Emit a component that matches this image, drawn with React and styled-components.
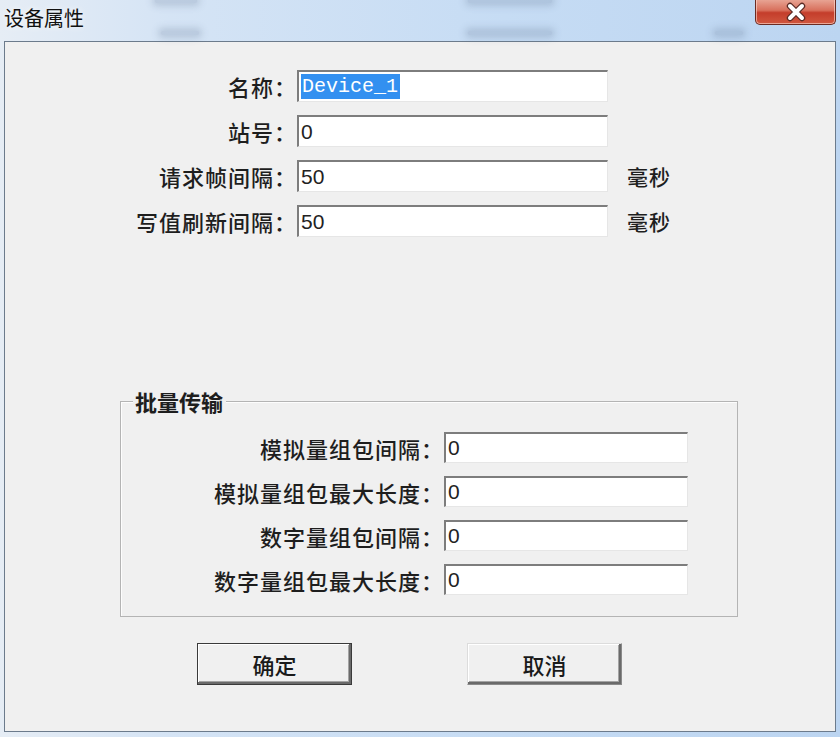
import React from "react";
import styled, { createGlobalStyle } from "styled-components";

const GlobalStyle = createGlobalStyle`
  html, body {
    margin: 0;
    padding: 0;
    background: #c5d9ef;
  }
  body {
    font-family: "Noto Sans CJK SC", "Liberation Sans", sans-serif;
  }
`;

const cjk = `"Noto Sans CJK SC", "Liberation Sans", sans-serif`;

const Window = styled.div`
  width: 840px;
  height: 737px;
  display: flex;
  flex-direction: column;
  background: linear-gradient(90deg, #e6edf5 0%, #d5e4f5 20%, #c6dcf4 60%, #bcd5f1 100%);
  overflow: hidden;
`;

const TitleBar = styled.div`
  position: relative;
  height: 41px;
  flex: none;
  display: flex;
  align-items: flex-start;
  justify-content: space-between;
`;

const Title = styled.div`
  position: relative;
  z-index: 1;
  margin: 5px 0 0 4px;
  font-family: ${cjk};
  font-size: 20px;
  line-height: 26px;
  color: #111;
  text-shadow: 0 0 6px rgba(255, 255, 255, 0.9);
`;

// blurred shapes of the window behind the glass frame
const Smudge = styled.div`
  position: absolute;
  left: ${(p) => p.x}px;
  top: ${(p) => p.y}px;
  width: ${(p) => p.w}px;
  height: 4px;
  border-radius: 4px;
  background: rgba(90, 110, 140, 0.2);
  box-shadow: 0 0 7px 3px rgba(90, 110, 140, 0.25);
`;

const CloseButton = styled.div`
  position: relative;
  z-index: 1;
  width: 81px;
  height: 26px;
  margin: -1px 4px 0 0;
  box-sizing: border-box;
  border: 1px solid #6b2b22;
  border-top: none;
  border-radius: 0 0 5px 5px;
  background: linear-gradient(180deg, #e9a898 0%, #d8705c 45%, #c43d2b 55%, #d0573f 100%);
  box-shadow: inset 0 0 0 1px rgba(255, 220, 210, 0.6);
  display: flex;
  align-items: center;
  justify-content: center;
`;

const Client = styled.div`
  flex: 1;
  margin: 0 4px 5px 4px;
  border: 1px solid #6c7b8c;
  background: #f0f0f0;
  padding-top: 28px;
  display: flex;
  flex-direction: column;
`;

const FormGrid = styled.div`
  display: grid;
  grid-template-columns: ${(p) => p.labelWidth}px ${(p) => p.fieldWidth}px auto;
  grid-auto-rows: ${(p) => p.rowHeight}px;
  row-gap: 13px;
`;

const Label = styled.div`
  align-self: center;
  text-align: right;
  font-family: ${cjk};
  font-size: 22px;
  font-weight: 500;
  letter-spacing: 1px;
  line-height: 26px;
  color: #1e1e1e;
  white-space: nowrap;
`;

const Field = styled.div`
  box-sizing: border-box;
  background: #fff;
  border-top: 2px solid #7d7d7d;
  border-left: 2px solid #7d7d7d;
  border-right: 1px solid #e6e6e6;
  border-bottom: 1px solid #e6e6e6;
  padding-left: 2px;
  display: flex;
  align-items: center;
  font-family: "Liberation Sans", sans-serif;
  font-size: 21px;
  color: #222;
  white-space: nowrap;
`;

const Selected = styled.span`
  background: #3390f0;
  color: #fff;
  font-family: "Liberation Mono", monospace;
  font-size: 20px;
  line-height: 25px;
  padding: 0 2px 0 1px;
`;

const Unit = styled.div`
  align-self: center;
  padding-left: 19px;
  font-family: ${cjk};
  font-size: 21px;
  font-weight: 500;
  letter-spacing: 1px;
  color: #1e1e1e;
`;

const GroupBox = styled.div`
  position: relative;
  margin: 164px 0 0 115px;
  width: 618px;
  box-sizing: border-box;
  border: 1px solid #b4b4b4;
  box-shadow: inset 1px 1px 0 #fdfdfd;
  padding: 30px 0 21px 0;
`;

const Legend = styled.div`
  position: absolute;
  top: -13px;
  left: 12px;
  padding: 0 3px 0 2px;
  background: #f0f0f0;
  font-family: ${cjk};
  font-size: 22px;
  font-weight: 700;
  line-height: 24px;
  color: #1e1e1e;
`;

const ButtonRow = styled.div`
  display: flex;
  gap: 115px;
  margin: 26px 0 0 192px;
`;

const Button = styled.button`
  width: 155px;
  height: 42px;
  box-sizing: border-box;
  background: #f0f0f0;
  font-family: ${cjk};
  font-size: 22px;
  font-weight: 500;
  color: #1a1a1a;
  padding: 0;
  border: ${(p) => (p.primary ? "1px solid #3a3a3a" : "1px solid #dcdcdc")};
  box-shadow: inset -2px -2px 0 #6a6a6a, inset 1px 1px 0 #fff, inset -3px -3px 0 #a4a4a4;
  border-right-color: ${(p) => (p.primary ? "#3a3a3a" : "#8a8a8a")};
  border-bottom-color: ${(p) => (p.primary ? "#3a3a3a" : "#8a8a8a")};
`;

const mainRows = [
  { label: "名称：", selected: "Device_1" },
  { label: "站号：", value: "0" },
  { label: "请求帧间隔：", value: "50", unit: "毫秒" },
  { label: "写值刷新间隔：", value: "50", unit: "毫秒" },
];

const groupRows = [
  { label: "模拟量组包间隔：", value: "0" },
  { label: "模拟量组包最大长度：", value: "0" },
  { label: "数字量组包间隔：", value: "0" },
  { label: "数字量组包最大长度：", value: "0" },
];

export default function App() {
  return (
    <>
      <GlobalStyle />
      <Window>
        <TitleBar>
          <Smudge x={155} y={-1} w={42} />
          <Smudge x={161} y={31} w={38} />
          <Smudge x={468} y={-1} w={84} />
          <Smudge x={468} y={31} w={84} />
          <Smudge x={715} y={31} w={28} />
          <Title>设备属性</Title>
          <CloseButton>
            <svg width="24" height="20" viewBox="0 0 24 20">
              <path d="M6 4 L18 16 M18 4 L6 16" stroke="#5a2a24" strokeWidth="6.4" strokeLinecap="round" />
              <path d="M6 4 L18 16 M18 4 L6 16" stroke="#fff" strokeWidth="4" strokeLinecap="round" />
            </svg>
          </CloseButton>
        </TitleBar>
        <Client>
          <FormGrid labelWidth={292} fieldWidth={311} rowHeight={32}>
            {mainRows.map((r) => (
              <React.Fragment key={r.label}>
                <Label>{r.label}</Label>
                <Field>{r.selected ? <Selected>{r.selected}</Selected> : r.value}</Field>
                <Unit>{r.unit}</Unit>
              </React.Fragment>
            ))}
          </FormGrid>

          <GroupBox>
            <Legend>批量传输</Legend>
            <FormGrid labelWidth={323} fieldWidth={244} rowHeight={31}>
              {groupRows.map((r) => (
                <React.Fragment key={r.label}>
                  <Label>{r.label}</Label>
                  <Field>{r.value}</Field>
                  <div />
                </React.Fragment>
              ))}
            </FormGrid>
          </GroupBox>

          <ButtonRow>
            <Button primary>确定</Button>
            <Button>取消</Button>
          </ButtonRow>
        </Client>
      </Window>
    </>
  );
}
